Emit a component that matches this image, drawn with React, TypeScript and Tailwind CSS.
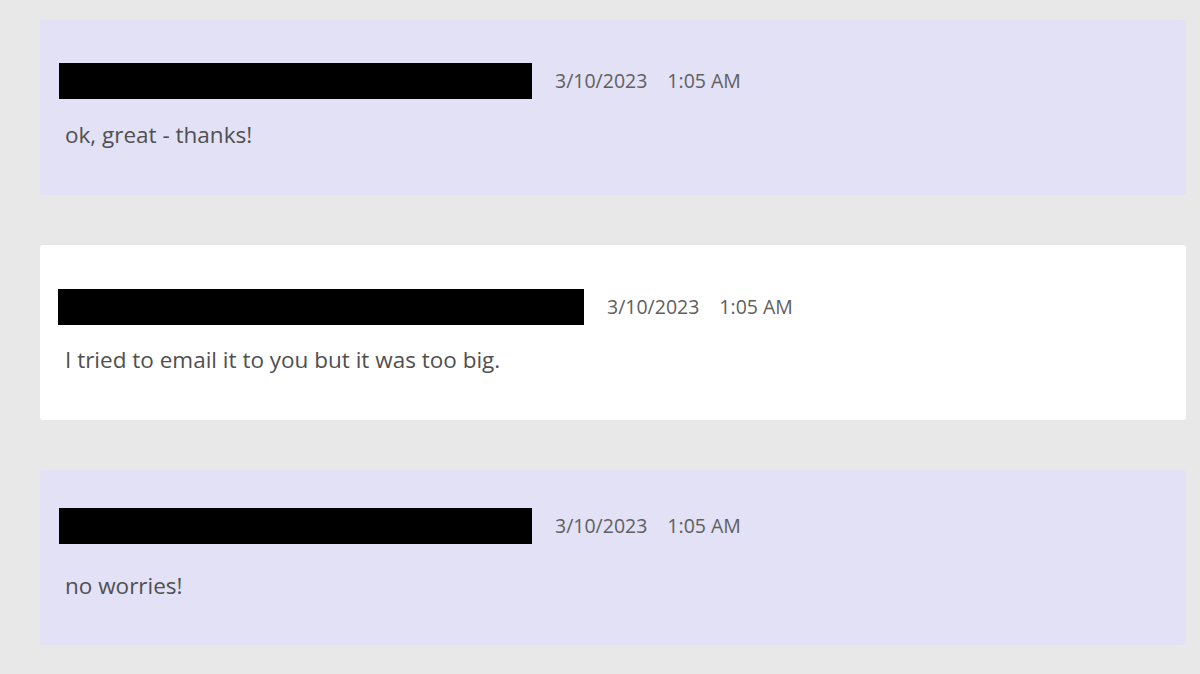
const messages = [
  { bar: 'w-[473px] ml-[19px]', pad: 'pt-[42px]', gap: 'mt-[19px]', bg: 'bg-[#e2e1f6]', date: '3/10/2023', time: '1:05 AM', text: 'ok, great - thanks!' },
  { bar: 'w-[526px] ml-[18px]', pad: 'pt-[43px]', gap: 'mt-[18px]', bg: 'bg-white', date: '3/10/2023', time: '1:05 AM', text: 'I tried to email it to you but it was too big.' },
  { bar: 'w-[473px] ml-[19px]', pad: 'pt-[37px]', gap: 'mt-[25px]', bg: 'bg-[#e2e1f6]', date: '3/10/2023', time: '1:05 AM', text: 'no worries!' },
]

export default function App() {
  return (
    <div
      className="min-h-[674px] w-[1200px] bg-[#e8e8e8] pt-5 pl-10"
      style={{ fontFamily: '"Open Sans", "Noto Sans", sans-serif' }}
    >
      <div className="flex w-[1146px] flex-col gap-[50px]">
        {messages.map((m, i) => (
          <div key={i} className={`h-[175px] rounded-[3px] ${m.bg} ${m.pad}`}>
            <div className="flex h-[37px] items-center">
              <div className={`h-9 ${m.bar} bg-black`} />
              <span className="ml-[23px] text-[19.5px] text-[#606060]">{m.date}</span>
              <span className="ml-[20px] text-[19.5px] text-[#606060]">{m.time}</span>
            </div>
            <p className={`${m.gap} pl-[25px] text-[22.5px] text-[#505050]`}>{m.text}</p>
          </div>
        ))}
      </div>
    </div>
  )
}
